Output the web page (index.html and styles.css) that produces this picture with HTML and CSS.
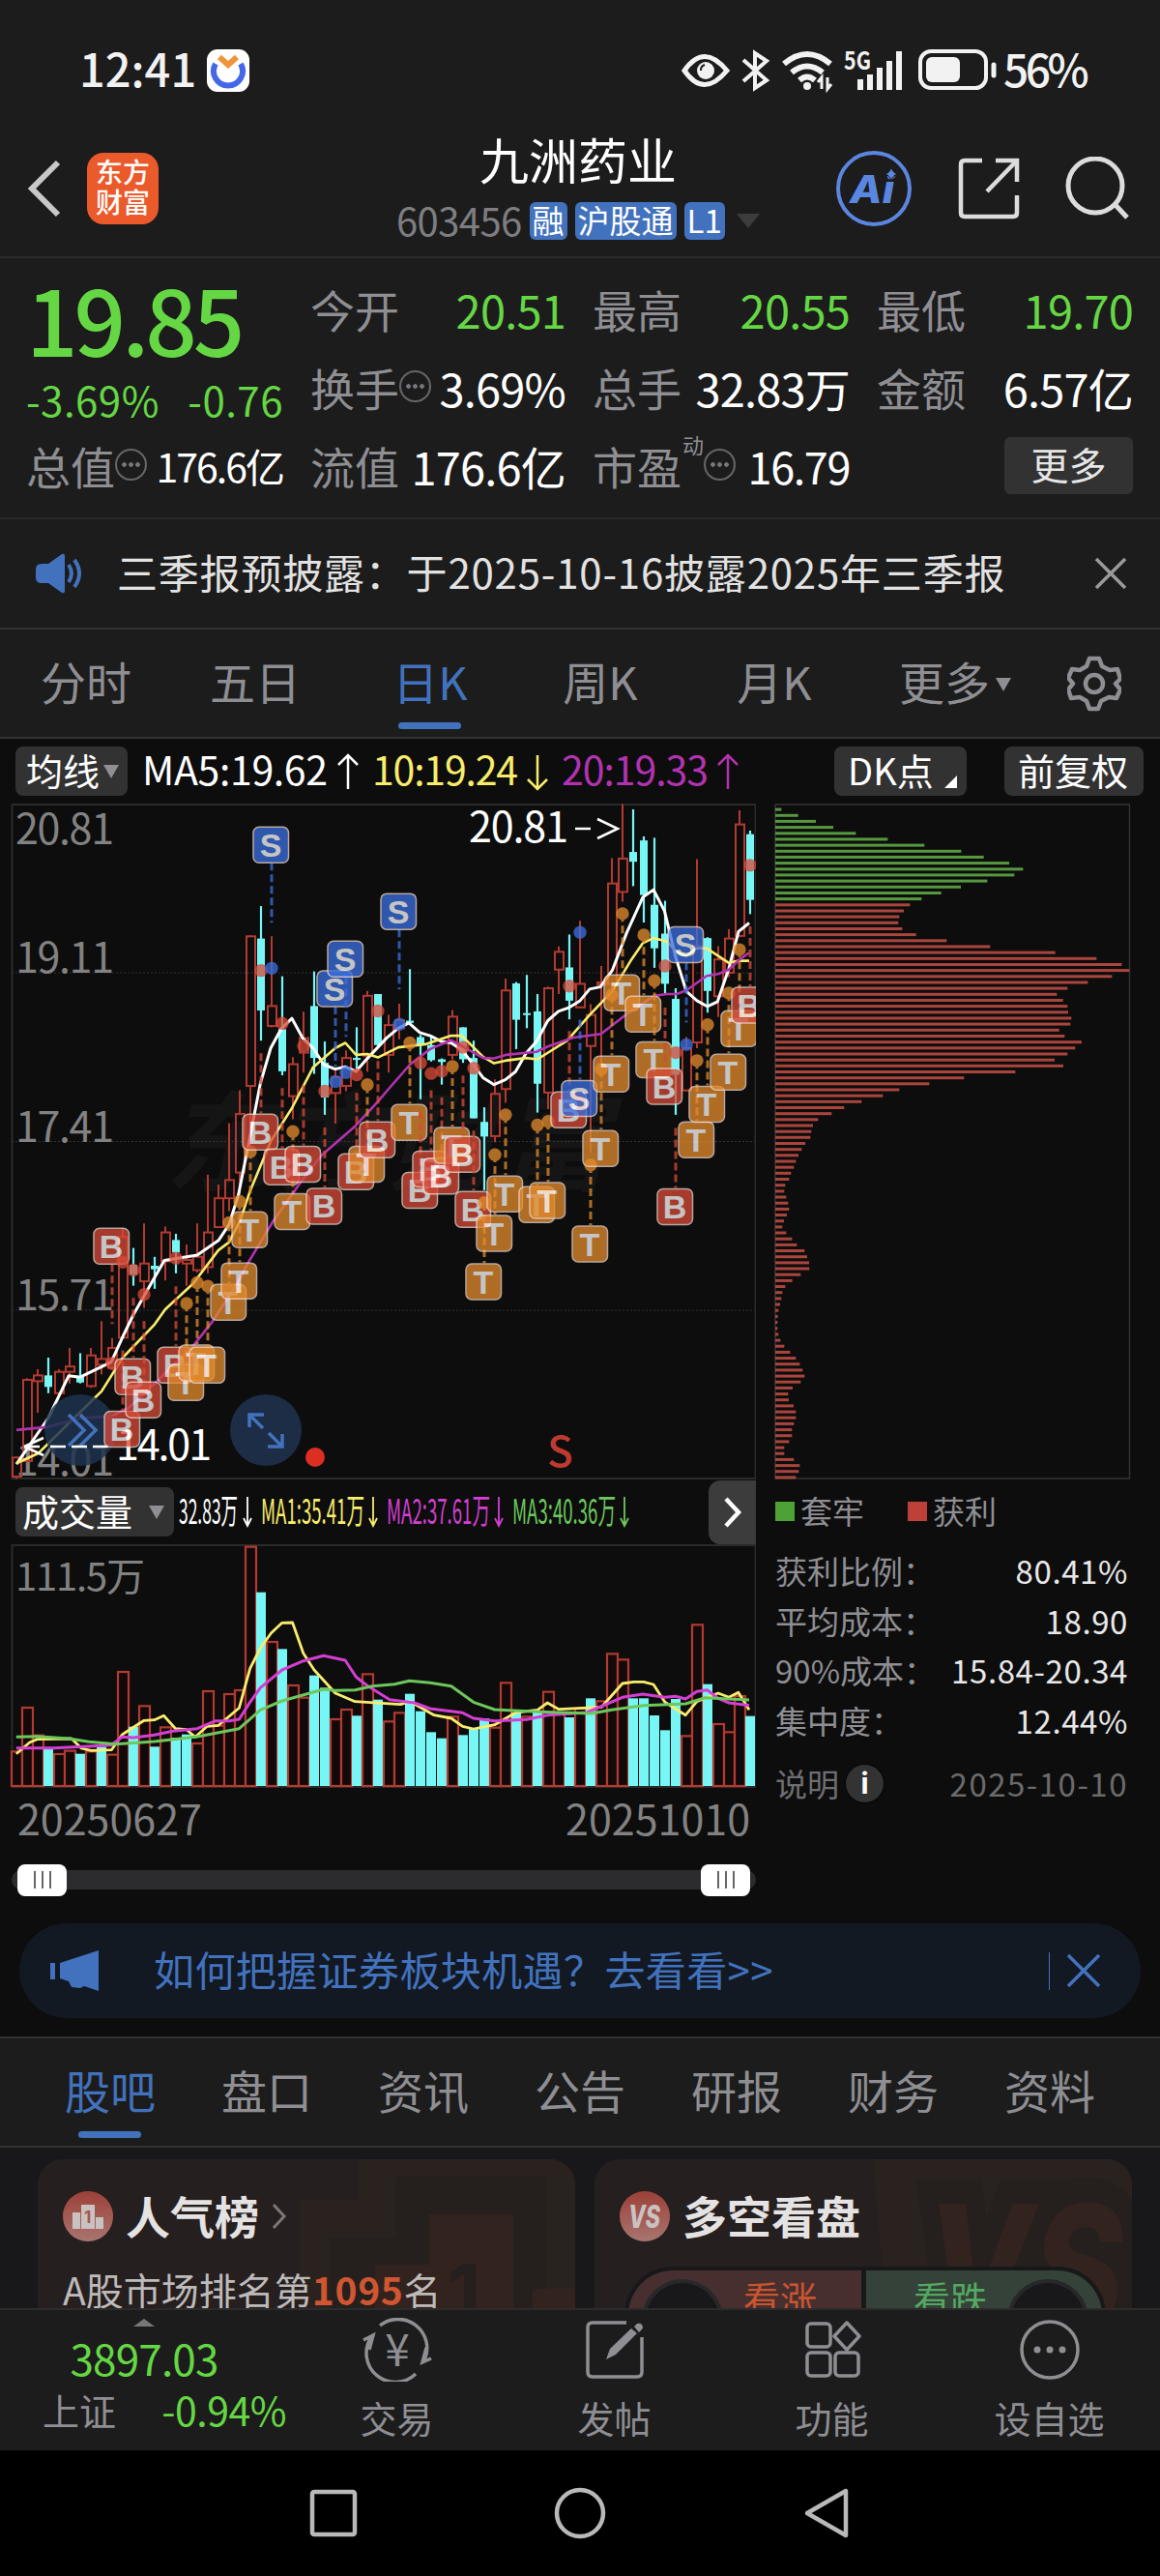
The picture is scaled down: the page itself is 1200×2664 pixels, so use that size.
FILE: index.html
```html
<!DOCTYPE html>
<html lang="zh-CN">
<head>
  <meta charset="UTF-8" />
  <meta name="viewport" content="width=device-width, initial-scale=1" />
  <title>九洲药业 603456</title>
  <link rel="stylesheet" href="styles.css">
</head>
<body>
  <div class="status-bar">
    <span class="clock">12:41</span>
    <svg class="app-dot" width="44" height="44" viewBox="0 0 44 44">
      <rect width="44" height="44" rx="11" fill="#fff"/>
      <path d="M9 15a15 15 0 1 0 26 0" fill="none" stroke="#4468e8" stroke-width="6"/>
      <path d="M13 8l9 8 9-8" fill="none" stroke="#f0943a" stroke-width="6"/>
    </svg>
    <svg class="status-icons" width="330" height="50" viewBox="0 0 330 50" fill="none" stroke="#f2f2f2">
      <path d="M4 25q20-29 44 0q-24 29-44 0z" stroke-width="5"/>
      <circle cx="26" cy="25" r="9" fill="#f2f2f2" stroke="none"/>
      <path d="M25 19a6 6 0 0 0-4 6" stroke="#1c1c1c" stroke-width="2"/>
      <path d="M65 14l24 21-12 8V7l12 8-24 21" stroke-width="4"/>
      <path d="M107 18q24-20 48 0M115 27q16-13 32 0M123 35q8-7 16 0" stroke-width="6"/>
      <circle cx="131" cy="41" r="4" fill="#f2f2f2" stroke="none"/>
      <path d="M146 44V32l-4 5M152 32v12l4-5" stroke-width="3"/>
      <text class="net" x="169" y="24" textLength="28" lengthAdjust="spacingAndGlyphs">5G</text>
      <path d="M186 45V34M196 45V29M206 45V22M216 45V15M226 45V5" stroke-width="6"/>
      <rect x="248" y="5" width="68" height="38" rx="11" stroke-width="4"/>
      <rect x="254" y="11" width="35" height="26" rx="6" fill="#f2f2f2" stroke="none"/>
      <path d="M324 19v11" stroke-width="5" stroke-linecap="round"/>
    </svg>
    <span class="battery">56%</span>
  </div>

  <div class="header">
    <svg class="back" width="40" height="62" viewBox="0 0 40 62"><path d="M33 4L6 31l27 27" fill="none" stroke="#c8c8c8" stroke-width="6"/></svg>
    <div class="logo">东方<br>财富</div>
    <div class="stock">
      <h1>九洲药业</h1>
      <div class="stock-code">
        <span class="code">603456</span>
        <span class="badge">融</span>
        <span class="badge">沪股通</span>
        <span class="badge">L1</span>
        <span class="tri big"></span>
      </div>
    </div>
    <div class="header-icons">
      <svg width="80" height="80" viewBox="0 0 80 80">
        <circle cx="40" cy="40" r="37" fill="none" stroke="#5b86e0" stroke-width="4"/>
        <text class="ai" x="15" y="55" textLength="46" lengthAdjust="spacingAndGlyphs">Ai</text>
        <path d="M58 17q1 7 7 8q-6 1-7 8q-1-7-7-8q6-1 7-8z" fill="#5b86e0" stroke="#1c1c1c"/>
      </svg>
      <svg width="66" height="66" viewBox="0 0 66 66" fill="none" stroke="#dcdcdc" stroke-width="4.5">
        <path d="M26 4H8q-4 0-4 4v50q0 4 4 4h50q4 0 4-4V40M40 4h22v22M62 4L31 36"/>
      </svg>
      <svg width="66" height="66" viewBox="0 0 66 66" fill="none" stroke="#dcdcdc" stroke-width="5">
        <circle cx="31" cy="30" r="28"/><path d="M51 49l13 14"/>
      </svg>
    </div>
  </div>

  <div class="quote">
    <div class="price-box">
      <div class="price">19.85</div>
      <div class="change"><span>-3.69%</span><span>-0.76</span></div>
    </div>
    <div class="cell"><label>今开</label><b class="green">20.51</b></div>
    <div class="cell"><label>最高</label><b class="green">20.55</b></div>
    <div class="cell"><label>最低</label><b class="green">19.70</b></div>
    <div class="cell"><label>换手<i class="more-dot"></i></label><b>3.69%</b></div>
    <div class="cell"><label>总手</label><b>32.83万</b></div>
    <div class="cell"><label>金额</label><b>6.57亿</b></div>
    <div class="cell"><label>总值<i class="more-dot"></i></label><b class="small">176.6亿</b></div>
    <div class="cell"><label>流值</label><b>176.6亿</b></div>
    <div class="cell"><label>市盈<sup>动</sup><i class="more-dot"></i></label><b class="pe">16.79</b></div>
    <div class="cell"><button class="more-btn">更多</button></div>
  </div>

  <div class="notice">
    <svg width="50" height="42" viewBox="0 0 50 42">
      <path d="M0 17q0-6 6-6h7L27 1q3-1 3 2v36q0 3-3 2L13 31H6q-6 0-6-6z" fill="#4272bd"/>
      <path d="M34 12q6 9 0 18M40 7q10 14 0 28" fill="none" stroke="#4272bd" stroke-width="4"/>
    </svg>
    <p>三季报预披露：于2025-10-16披露2025年三季报</p>
    <svg width="34" height="34" viewBox="0 0 34 34"><path d="M2 2l30 30M32 2L2 32" stroke="#9a9a9a" stroke-width="3.5"/></svg>
  </div>

  <div class="period-tabs">
    <span>分时</span>
    <span>五日</span>
    <span class="active">日K</span>
    <span>周K</span>
    <span>月K</span>
    <span>更多<i class="tri"></i></span>
    <svg width="56" height="58" viewBox="0 0 56 58" fill="none" stroke="#8e8e93" stroke-width="4.5" stroke-linejoin="round">
      <path d="M23 3h10l3 8 8 4 8-1 3 10-5 5 5 6-4 9-8-1-8 4-3 8H23l-3-8-7-4-9 1-3-9 5-6-5-6 4-9 8 1 7-4z"/>
      <circle cx="28" cy="29" r="9"/>
    </svg>
  </div>

  <div class="chart-area">
    <div class="ma-bar">
      <span class="pill">均线<i class="tri"></i></span>
      <svg class="ma-values" width="640" height="50" viewBox="0 0 640 50">
        <g fill="#fff" stroke="#fff"><text x="0" y="39" textLength="192">MA5:19.62</text><path d="M213 43V8M203 18l10-10 10 10"/></g>
        <g fill="#f8ec6c" stroke="#f8ec6c"><text x="238" y="39" textLength="151">10:19.24</text><path d="M409 8v35M399 33l10 10 10-10"/></g>
        <g fill="#b233b0" stroke="#b233b0"><text x="434" y="39" textLength="152">20:19.33</text><path d="M606 43V8M596 18l10-10 10 10"/></g>
      </svg>
      <span class="pill dk">DK点<i class="corner"></i></span>
      <span class="pill adj">前复权</span>
    </div>

    <div class="charts">
      <div class="left">
        <svg id="kline" width="782" height="699" viewBox="0 0 782 699"></svg>
        <div class="vol-bar">
          <span class="pill">成交量<i class="tri"></i></span>
          <svg width="480" height="50" viewBox="0 0 480 50">
            <g fill="#fff" stroke="#fff"><text x="0" y="37" textLength="61" lengthAdjust="spacingAndGlyphs">32.83万</text><path d="M71 9v30M67 31l4 8 4-8"/></g>
            <g fill="#f8ec6c" stroke="#f8ec6c"><text x="85" y="37" textLength="107" lengthAdjust="spacingAndGlyphs">MA1:35.41万</text><path d="M201 9v30M197 31l4 8 4-8"/></g>
            <g fill="#d23fd2" stroke="#d23fd2"><text x="215" y="37" textLength="107" lengthAdjust="spacingAndGlyphs">MA2:37.61万</text><path d="M331 9v30M327 31l4 8 4-8"/></g>
            <g fill="#6cc75c" stroke="#6cc75c"><text x="345" y="37" textLength="107" lengthAdjust="spacingAndGlyphs">MA3:40.36万</text><path d="M461 9v30M457 31l4 8 4-8"/></g>
          </svg>
          <span class="next"><svg width="20" height="34" viewBox="0 0 20 34"><path d="M3 3l13 14L3 31" fill="none" stroke="#fff" stroke-width="5"/></svg></span>
        </div>
        <svg id="volume" width="782" height="252" viewBox="0 0 782 252"></svg>
        <div class="dates"><span>20250627</span><span>20251010</span></div>
        <div class="slider"><i class="handle"></i><i class="handle"></i></div>
      </div>

      <div class="right">
        <svg id="chips" width="370" height="699" viewBox="0 0 370 699"></svg>
        <div class="legend">
          <span><i class="sq g"></i>套牢</span>
          <span><i class="sq r"></i>获利</span>
        </div>
        <div class="chip-row"><label>获利比例：</label><b>80.41%</b></div>
        <div class="chip-row"><label>平均成本：</label><b>18.90</b></div>
        <div class="chip-row"><label>90%成本：</label><b>15.84-20.34</b></div>
        <div class="chip-row"><label>集中度：</label><b>12.44%</b></div>
        <div class="chip-row note"><label>说明<i class="info">i</i></label><span>2025-10-10</span></div>
      </div>
    </div>

    <div class="banner">
      <svg width="50" height="42" viewBox="0 0 50 42" fill="#4272bd">
        <path d="M0 13h5v17H0zM10 13L50 0v42l-15-5-4 2-9-1-3-6-9-3z"/>
      </svg>
      <p>如何把握证券板块机遇？去看看&gt;&gt;</p>
      <i class="bar"></i>
      <svg width="34" height="36" viewBox="0 0 34 36"><path d="M1 2l32 32M33 2L1 34" stroke="#4272bd" stroke-width="3.5"/></svg>
    </div>
  </div>

  <div class="info-tabs">
    <span class="active">股吧</span>
    <span>盘口</span>
    <span>资讯</span>
    <span>公告</span>
    <span>研报</span>
    <span>财务</span>
    <span>资料</span>
  </div>

  <div class="cards">
    <div class="card">
      <svg class="card-bg" width="290" height="160" viewBox="0 0 290 160">
        <path d="M5 160V42h61V0h224v160z" fill="#2a221f"/>
        <path d="M36 160V81h68V18h156v142z" fill="#251f1e"/>
        <path d="M83 160v-51h56V57h87v103zM246 134h44v26h-44z" fill="#33231f"/>
        <text class="bg-one" x="158" y="166">1</text>
      </svg>
      <div class="card-title">
        <svg width="52" height="52" viewBox="0 0 52 52">
          <circle cx="26" cy="26" r="26" fill="url(#rd)"/>
          <path d="M10 22h8v17h-8zM19 14h14v25H19zM34 27h8v12h-8z" fill="#c9c2c1"/>
          <text class="one" x="22" y="33">1</text>
          <defs><linearGradient id="rd" x1="0" y1="0" x2="0" y2="1"><stop offset="0" stop-color="#9c4038"/><stop offset="1" stop-color="#a87570"/></linearGradient></defs>
        </svg>
        <h2>人气榜</h2>
        <svg width="16" height="26" viewBox="0 0 16 26"><path d="M2 1l11 12L2 25" fill="none" stroke="#7d7675" stroke-width="3"/></svg>
      </div>
      <p class="rank">A股市场排名第<b>1095</b>名</p>
    </div>
    <div class="card">
      <svg class="card-bg" width="270" height="160" viewBox="0 0 270 160">
        <path d="M2 0h268v160H16z" fill="#2a221f"/>
        <text class="bg-vs" x="56" y="180" textLength="205" lengthAdjust="spacingAndGlyphs">VS</text>
      </svg>
      <div class="card-title">
        <svg width="52" height="52" viewBox="0 0 52 52">
          <circle cx="26" cy="26" r="26" fill="url(#rd)"/>
          <text class="vs" x="9" y="38" textLength="33" lengthAdjust="spacingAndGlyphs">VS</text>
        </svg>
        <h2>多空看盘</h2>
      </div>
      <div class="vote">
        <div class="up"><i></i><span>看涨</span></div>
        <div class="down"><span>看跌</span><i></i></div>
      </div>
    </div>
  </div>

  <div class="bottom-nav">
    <div class="index">
      <i class="tri up"></i>
      <div class="index-value">3897.03</div>
      <div class="index-row"><span>上证</span><b>-0.94%</b></div>
    </div>
    <div class="nav-item">
      <svg width="72" height="66" viewBox="0 0 72 66" fill="none" stroke="#8e8e93" stroke-width="3.5">
        <path d="M18 8A30 30 0 0 1 64 44M71 42l-9 4 4-15M55 58A30 30 0 0 1 9 20M1 23l10-5-4 15"/>
        <text class="yen" x="36" y="50">¥</text>
      </svg>
      <span>交易</span>
    </div>
    <div class="nav-item">
      <svg width="62" height="66" viewBox="0 0 62 66" fill="none" stroke="#8e8e93" stroke-width="3.5">
        <path d="M43 5H8q-5 0-5 5v46q0 5 5 5h46q5 0 5-5V20"/>
        <path d="M22 43l4-11L48 11l6 5-22 22zM51 9l3-3q3-1 5 1 2 3 0 5l-3 3z" fill="#8e8e93" stroke="none"/>
      </svg>
      <span>发帖</span>
    </div>
    <div class="nav-item">
      <svg width="60" height="66" viewBox="0 0 60 66" fill="none" stroke="#8e8e93" stroke-width="3.5">
        <rect x="4" y="6" width="24" height="24" rx="4"/><rect x="4" y="36" width="24" height="24" rx="4"/><rect x="33" y="36" width="24" height="24" rx="4"/>
        <path d="M45 5l13 14-13 14-13-14z" stroke-linejoin="round"/>
      </svg>
      <span>功能</span>
    </div>
    <div class="nav-item">
      <svg width="62" height="66" viewBox="0 0 62 66" fill="none" stroke="#8e8e93" stroke-width="3.5">
        <circle cx="31" cy="33" r="29"/>
        <g fill="#8e8e93" stroke="none"><circle cx="18" cy="33" r="3.5"/><circle cx="31" cy="33" r="3.5"/><circle cx="44" cy="33" r="3.5"/></g>
      </svg>
      <span>设自选</span>
    </div>
  </div>

  <div class="system-nav">
    <svg width="50" height="56" viewBox="0 0 50 56"><rect x="3" y="6" width="44" height="44" rx="2" fill="none" stroke="#b9b9b9" stroke-width="4.5"/></svg>
    <svg width="56" height="56" viewBox="0 0 56 56"><circle cx="28" cy="28" r="24" fill="none" stroke="#b9b9b9" stroke-width="4.5"/></svg>
    <svg width="50" height="56" viewBox="0 0 50 56"><path d="M45 5v46L5 28z" fill="none" stroke="#b9b9b9" stroke-width="4.5" stroke-linejoin="round"/></svg>
  </div>

  <script src="chart.js"></script>
</body>
</html>
```
FILE: styles.css
```css
* {
  box-sizing: border-box;
}
body {
  margin: 0;
  width: 1200px;
  height: 2664px;
  overflow: hidden;
  display: flex;
  flex-direction: column;
  background: #1c1c1c;
  color: #fff;
  font-family: "Noto Sans CJK SC", sans-serif;
  line-height: 1;
}
h1, h2, p {
  margin: 0;
  font-weight: 400;
}
b {
  font-weight: 400;
}
i {
  font-style: normal;
}
svg {
  display: block;
  flex: none;
}

/* Status bar */
.status-bar {
  height: 145px;
  padding: 0 74px 0 82px;
  display: flex;
  align-items: center;
  color: #f2f2f2;
  font-size: 47px;
  font-weight: 500;
}
.clock {
  width: 132px;
  padding-bottom: 6px;
}
.status-icons {
  margin-left: auto;
}
.net {
  font-size: 26px;
  font-weight: 700;
  fill: #f2f2f2;
  stroke: none;
}
.battery {
  width: 88px;
  margin-left: 4px;
  padding-bottom: 6px;
  font-size: 46px;
  letter-spacing: -3.5px;
  white-space: nowrap;
}

/* Header */
.header {
  height: 122px;
  border-bottom: 2px solid #2c2c2c;
  display: grid;
  grid-template-columns: 90px 74px 692px 344px;
  grid-template-rows: 99px;
  align-items: center;
}
.back {
  margin-left: 27px;
}
.logo {
  width: 74px;
  height: 74px;
  border-radius: 17px;
  background: #ea5a2b;
  font-size: 28px;
  line-height: 31px;
  font-weight: 500;
  text-align: center;
  padding-top: 4px;
}
.stock {
  padding-left: 246px;
}
.stock h1 {
  font-size: 51px;
  line-height: 54px;
  margin: -4px 0 18px 86px;
}
.stock-code {
  display: flex;
  align-items: center;
  gap: 8px;
  height: 40px;
}
.code {
  font-size: 40px;
  color: #7e7e82;
  letter-spacing: -0.6px;
  padding-bottom: 3px;
}
.badge {
  height: 39px;
  padding: 0 3px;
  border-radius: 6px;
  background: #4272bd;
  font-size: 33px;
  line-height: 36px;
}
.header-icons {
  display: flex;
  align-items: center;
  gap: 46px;
  padding-left: 8px;
}
.header-icons svg:nth-child(3) {
  margin-left: 2px;
}
.header-icons svg:nth-child(2) {
  margin-right: -2px;
}
.ai {
  font: italic 800 40px "Inter", sans-serif;
  fill: #5b86e0;
}

/* small triangles used for dropdowns */
.tri {
  display: inline-block;
  border: 8px solid transparent;
  border-top: 14px solid #8e8e93;
  border-bottom: 0;
}
.tri.big {
  border-width: 15px 12px 0;
  border-top-color: #3c3c3c;
  margin-left: 4px;
}
.tri.up {
  border-width: 0 11px 8px;
  border-bottom: 8px solid #77777a;
}

/* Quote */
.quote {
  height: 270px;
  padding: 14px 27px 12px;
  border-bottom: 2px solid #272727;
  display: grid;
  grid-template-columns: 266px 264px 266px 265px;
  grid-template-rows: repeat(3, 81px);
  column-gap: 28px;
}
.price-box {
  grid-row: 1 / 3;
  color: #65d744;
}
.price {
  margin-top: -6px;
  font-size: 94px;
  font-weight: 500;
  letter-spacing: -4px;
  line-height: 106px;
}
.change {
  display: flex;
  justify-content: space-between;
  font-size: 42px;
  line-height: 64px;
}
.change span {
  letter-spacing: 0.5px;
}
.cell {
  display: flex;
  align-items: center;
  justify-content: space-between;
  white-space: nowrap;
}
.cell label {
  display: flex;
  align-items: center;
  padding-bottom: 5px;
  font-size: 46px;
  color: #8e8e93;
}
.cell b {
  padding-bottom: 5px;
  font-size: 47px;
  letter-spacing: -0.8px;
}
.cell b.green {
  color: #65d744;
}
.cell b.small {
  font-size: 41px;
  letter-spacing: -2px;
}
.cell b.pe {
  font-size: 45px;
  letter-spacing: -1.4px;
}
.cell sup {
  font-size: 22px;
  margin: -44px 0 0 1px;
}
.more-dot {
  width: 33px;
  height: 33px;
  margin-top: -1px;
  border: 2px solid #66666a;
  border-radius: 50%;
  background: radial-gradient(circle, #77777b 2px, transparent 2.6px) center / 7px 7px repeat-x;
  box-shadow: inset 0 0 0 4px #1c1c1c;
}
.more-btn {
  width: 133px;
  height: 59px;
  margin-left: auto;
  margin-top: -4px;
  padding: 0 0 5px;
  border: 0;
  border-radius: 6px;
  background: #323232;
  color: #e6e6e6;
  font: 39px/1 "Noto Sans CJK SC", sans-serif;
}

/* Notice */
.notice {
  height: 114px;
  padding: 0 34px 0 37px;
  border-bottom: 2px solid #333;
  display: flex;
  align-items: center;
  color: #e2e2e2;
}
.notice p {
  flex: 1;
  margin-left: 34px;
  padding-bottom: 4px;
  font-size: 42px;
  letter-spacing: 0.8px;
  white-space: nowrap;
}

/* Tabs */
.period-tabs {
  height: 113px;
  border-bottom: 2px solid #333;
  display: grid;
  grid-template-columns: 178px 172px 190px 162px 198px 176px 112px;
  justify-items: center;
  align-items: center;
  font-size: 47px;
  color: #8e8e93;
}
.period-tabs span,
.info-tabs span {
  padding-bottom: 6px;
}
.period-tabs .tri {
  margin: 0 0 9px 6px;
}
.active {
  color: #4272bd;
  position: relative;
}
.active::after {
  content: "";
  position: absolute;
  left: 50%;
  bottom: -21px;
  width: 65px;
  height: 7px;
  margin-left: -33px;
  border-radius: 4px;
  background: #4272bd;
}

/* Charts */
.chart-area {
  height: 1342px;
  background: #0d0d0d;
}
.pill {
  display: flex;
  align-items: center;
  height: 51px;
  border-radius: 8px;
  background: #323232;
  font-size: 38px;
  padding: 0 9px 4px 11px;
  white-space: nowrap;
}
.ma-bar {
  height: 67px;
  padding: 0 16px;
  display: flex;
  align-items: center;
}
.ma-bar .tri {
  margin: 4px 0 0 4px;
}
.ma-values {
  margin: 0 76px 0 15px;
  font-size: 41px;
}
.ma-values path,
.vol-bar path {
  fill: none;
  stroke-width: 2.5;
}
.vol-bar g path {
  stroke-width: 1.8;
}
.ma-values text,
.vol-bar text {
  stroke: none;
}
.dk {
  width: 137px;
  padding: 0 0 4px 14px;
}
.corner {
  align-self: flex-end;
  margin: 0 0 4px 11px;
  border-left: 13px solid transparent;
  border-bottom: 13px solid #fff;
}
.adj {
  width: 144px;
  padding: 0 0 4px 14px;
  margin-left: 39px;
}
.charts {
  display: flex;
  height: 1158px;
}
.left {
  width: 782px;
  margin-right: 19px;
}
.vol-bar {
  height: 67px;
  padding-left: 16px;
  display: flex;
  align-items: center;
}
.vol-bar .pill {
  width: 164px;
  margin-right: 5px;
  padding-left: 7px;
}
.vol-bar .tri {
  margin: 4px 0 0 17px;
}
.vol-bar svg {
  font-size: 36px;
}
.next {
  width: 49px;
  height: 66px;
  margin-left: auto;
  border-radius: 12px 0 0 12px;
  background: #3c3c3c;
  display: flex;
  align-items: center;
  justify-content: center;
}
.next svg path {
  stroke-width: 4.5;
}
.dates {
  height: 78px;
  padding: 9px 6px 0 18px;
  display: flex;
  justify-content: space-between;
  font-size: 43px;
  color: #828282;
}
.slider {
  height: 20px;
  margin: 7px 0 0 12px;
  padding: 0 6px;
  border-radius: 10px;
  background: #2c2c2e;
  display: flex;
  align-items: center;
  justify-content: space-between;
}
.handle {
  width: 51px;
  height: 33px;
  border-radius: 8px;
  background: linear-gradient(90deg, transparent 17px, #666 17px 19px, transparent 19px 25px, #666 25px 27px, transparent 27px 33px, #666 33px 35px, transparent 35px) center / 100% 18px no-repeat #fff;
}
.right {
  width: 370px;
}
.legend {
  display: flex;
  height: 65px;
  margin-bottom: 4px;
  align-items: center;
  font-size: 33px;
  color: #8e8e93;
}
.legend span {
  width: 137px;
  display: flex;
  align-items: center;
}
.sq {
  width: 20px;
  height: 20px;
  margin: 0 6px 0 1px;
}
.sq.g {
  background: #4ca234;
}
.sq.r {
  background: #be4139;
}
.chip-row {
  height: 51.5px;
  padding: 0 4px 0 1px;
  display: flex;
  align-items: center;
  justify-content: space-between;
  font-size: 33px;
  white-space: nowrap;
}
.chip-row label {
  display: flex;
  align-items: center;
  color: #8e8e93;
}
.chip-row b {
  color: #e8e8e8;
  letter-spacing: 0.6px;
}
.chip-row.note {
  height: 78px;
  color: #6a6a6a;
}
.chip-row.note span {
  letter-spacing: 1.5px;
}
.chip-row.note label {
  color: #6e6e72;
}
.info {
  width: 39px;
  height: 39px;
  margin-left: 7px;
  border-radius: 50%;
  background: #333;
  box-shadow: 0 0 0 1px #060606;
  color: #fff;
  font: 700 30px/38px "Inter", sans-serif;
  text-align: center;
}

/* Banner */
.banner {
  height: 98px;
  margin: 0 20px;
  padding: 0 42px 0 32px;
  border-radius: 49px;
  background: #121923;
  display: flex;
  align-items: center;
  color: #4272bd;
}
.banner p {
  flex: 1;
  margin-left: 57px;
  padding-bottom: 4px;
  font-size: 42px;
  letter-spacing: 0.4px;
}
.banner .bar {
  width: 1px;
  height: 39px;
  margin-right: 18px;
  background: #4272bd;
}

/* Info tabs */
.info-tabs {
  height: 115px;
  padding: 0 33px;
  border-top: 2px solid #333;
  border-bottom: 2px solid #333;
  display: grid;
  grid-template-columns: repeat(7, 1fr);
  justify-items: center;
  align-items: center;
  font-size: 47px;
  color: #8e8e93;
}

/* Cards */
.cards {
  height: 166px;
  padding: 12px 29px 0 39px;
  background: #18181a;
  display: flex;
  gap: 20px;
  overflow: hidden;
}
.card {
  position: relative;
  width: 556px;
  height: 300px;
  padding: 33px 26px;
  border-radius: 26px;
  background: #261f1f;
  overflow: hidden;
}
.card-bg {
  position: absolute;
  top: 0;
  right: 0;
}
.bg-one {
  font: 700 80px "Inter", sans-serif;
  fill: #251f1e;
}
.bg-vs {
  font: italic 800 184px "Inter", sans-serif;
  fill: #33231f;
  stroke: #251f1e;
  stroke-width: 50px;
  paint-order: stroke;
}
.card-title {
  position: relative;
  display: flex;
  align-items: center;
  gap: 13px;
}
.card-title h2 {
  font-size: 46px;
  font-weight: 700;
  color: #e4e2e2;
  line-height: 48px;
  padding-bottom: 4px;
}
.one {
  font: 700 17px "Inter", sans-serif;
  fill: #a6564f;
}
.vs {
  font: italic 800 32px "Inter", sans-serif;
  fill: #c9c2c1;
}
.rank {
  position: relative;
  margin-top: 30px;
  font-size: 39px;
  color: #bdbaba;
  white-space: nowrap;
}
.rank b {
  font-weight: 700;
  letter-spacing: 0.7px;
  color: #cf5630;
}
.vote {
  position: relative;
  width: 498px;
  height: 110px;
  margin: 26px 0 0 5px;
  border: 4px solid #18181a;
  border-radius: 50px;
  background: #18181a;
  display: flex;
  gap: 5px;
  overflow: hidden;
  font-size: 38px;
}
.vote > div {
  flex: 1;
  display: flex;
  justify-content: space-between;
  padding: 9px 10px 0 14px;
}
.vote .up {
  background: #472f2f;
  color: #c8552f;
  padding-right: 46px;
}
.vote .down {
  background: #344239;
  color: #54a862;
  padding: 9px 14px 0 49px;
}
.vote i {
  width: 84px;
  height: 84px;
  border-radius: 50%;
  background: #18181a;
  border: 4px solid rgba(255, 255, 255, 0.07);
}

/* Bottom navigation */
.bottom-nav {
  height: 147px;
  border-top: 2px solid #2c2c2c;
  display: grid;
  grid-template-columns: 298px repeat(4, 225px);
  background: #1c1c1c;
}
.index {
  display: flex;
  flex-direction: column;
  align-items: center;
  padding-top: 9px;
}
.index-value {
  margin-top: 7px;
  font-size: 44px;
  line-height: 50px;
  letter-spacing: -0.8px;
  color: #65d744;
}
.index-row {
  align-self: stretch;
  padding: 0 2px 0 44px;
  margin-top: 8px;
  display: flex;
  align-items: center;
  justify-content: space-between;
  font-size: 38px;
  color: #8e8e93;
}
.index-row b {
  font-size: 41px;
  letter-spacing: -0.5px;
  color: #65d744;
}
.nav-item {
  display: flex;
  flex-direction: column;
  align-items: center;
  padding-top: 8px;
  font-size: 38px;
  color: #8e8e93;
}
.nav-item span {
  margin-top: 18px;
}
.yen {
  font: 400 46px "Noto Sans CJK SC", sans-serif;
  fill: #8e8e93;
  stroke: none;
  text-anchor: middle;
}

.system-nav {
  flex: 1;
  background: #000;
  display: flex;
  align-items: center;
  justify-content: center;
  gap: 202px;
}

/* Chart text */
.axis {
  font-size: 43px;
  fill: #828282;
}
.mark {
  font: 700 34px "Liberation Sans", sans-serif;
  fill: #fff;
  text-anchor: middle;
}
.watermark {
  font-size: 112px;
  font-weight: 700;
  font-style: italic;
  fill: #151515;
}
```
FILE: chart.js
```js
const RED = '#b23a30';
const CYAN = '#77f6f6';
const x = i => 17 + 11 * i;

// one row per day: up/down, high, body top, body bottom, low
const candles = [
  ['r',1495,1497,1540,1545],['r',1318,1322,1505,1508],['r',1298,1312,1325,1396],['c',1272,1312,1338,1352],['r',1298,1304,1352,1356],
  ['r',1250,1292,1304,1330],['c',1262,1313,1328,1330],['r',1250,1267,1336,1340],['r',1190,1275,1288,1310],['r',1228,1250,1295,1300],
  ['r',980,1000,1227,1228],['c',1025,1063,1085,1110],['r',970,1060,1100,1160],['c',1045,1065,1073,1117],['r',977,990,1055,1098],
  ['c',993,1007,1035,1082],['r',1017,1052,1060,1110],['r',970,1045,1075,1080],['r',860,990,1068,1082],['r',882,913,978,980],
  ['r',744,872,913,942],['r',670,723,855,905],['r',320,323,660,800],['c',255,328,490,558],['r',323,480,525,528],
  ['c',413,532,627,636],['r',595,611,683,735],['r',493,552,585,630],['c',402,480,597,633],['c',560,608,686,725],
  ['r',620,640,676,745],['r',580,597,660,672],['c',528,597,601,630],['r',446,457,592,628],['c',453,453,568,570],
  ['r',500,523,590,630],['r',475,512,530,555],['c',397,513,518,520],['c',545,550,567,690],['c',550,568,602,605],
  ['c',598,600,606,657],['r',489,504,590,600],['c',528,528,600,608],['c',558,597,733,733],['c',708,741,774,895],
  ['r',645,678,773,787],['r',418,445,667,698],['c',426,429,511,577],['c',410,496,500,530],['c',453,492,655,720],
  ['r',436,440,675,712],['r',346,358,398,453],['c',319,393,468,510],['r',288,430,483,485],['r',476,500,570,810],
  ['r',390,427,432,620],['r',147,204,430,440],['r',25,148,223,245],['c',37,133,155,210],['c',98,107,230,292],
  ['c',101,252,350,394],['c',243,317,430,455],['c',440,464,635,725],['r',550,575,670,672],['r',149,345,562,575],
  ['c',325,327,446,495],['r',345,375,458,505],['r',307,328,405,415],['r',39,71,322,325],['c',85,93,241,273]
];

const ma5 = [51,1512,150,1408,213,1313,249,1316,345,1282,381,1225,414,1175,510,1053,612,1041,678,1008,711,972,740,905,777,770,808,655,840,575,874,530,906,508,940,553,972,575,1005,612,1040,622,1072,617,1105,627,1140,598,1200,552,1236,530,1269,518,1303,540,1335,547,1370,560,1400,563,1435,580,1467,610,1500,642,1533,657,1568,646,1600,628,1632,587,1665,560,1700,513,1733,492,1767,483,1800,468,1830,442,1863,437,1900,400,1945,315,1995,235,2028,218,2062,265,2097,370,2130,447,2163,468,2195,481,2227,470,2262,395,2292,312,2325,293];
const ma10 = [51,1510,120,1487,213,1420,315,1348,381,1272,480,1197,513,1163,600,1105,678,1030,711,1012,744,965,777,895,840,785,906,710,972,618,1040,575,1072,563,1105,590,1140,588,1173,596,1200,586,1236,573,1320,566,1400,547,1433,547,1500,595,1533,609,1568,603,1632,597,1668,600,1760,558,1830,500,1900,447,1960,375,1995,338,2028,327,2070,335,2100,358,2130,368,2160,350,2193,350,2262,383,2292,378,2325,378];
const ma20 = [51,1435,150,1428,250,1408,345,1404,400,1385,480,1330,600,1245,660,1190,740,1100,770,1058,850,962,940,870,1000,815,1100,752,1173,695,1200,672,1272,612,1335,577,1400,557,1500,597,1533,598,1570,590,1665,583,1700,571,1780,551,1865,543,1945,498,2030,457,2070,453,2100,453,2130,445,2193,412,2229,408,2262,398,2292,377,2325,360];

// day, label, box centre, dot, box above its line
const marks = [
  [9,'B',1020,1285,1],[10,'B',1432,1057],[11,'B',1314,1075],[12,'B',1366,1130],[15,'B',1288,1048],[16,'T',1327,1150],
  [17,'T',1283,1103],[18,'T',1288,1111],[20,'T',1146,968],[21,'T',1098,920],[22,'T',983,808],[23,'B',763,400],
  [24,'S',116,395,1],[25,'B',841,519],[26,'T',942,763],[27,'B',835,570],[29,'B',930,672],[30,'S',440,650,1],
  [31,'S',373,630,1],[32,'B',852,635],[33,'T',835,657],[34,'B',780,491],[36,'S',266,521,1],[37,'T',741,563],
  [38,'B',894,608],[39,'B',846,632],[40,'B',862,627],[41,'T',793,616],[42,'B',813,573],[43,'B',937,620],
  [44,'T',1100,923],[45,'T',991,815],[46,'T',902,725],[49,'T',926,748],[50,'T',917,740],[52,'B',713,435],
  [53,'S',687,314],[54,'T',1015,838],[55,'T',800,622],[56,'T',632,455],[57,'T',449,272],[59,'T',497,320],
  [60,'T',600,423],[61,'B',660,390],[62,'B',931,585],[63,'S',341,567,1],[64,'T',780,603],[65,'T',700,522],
  [67,'T',628,451],[68,'T',530,353],[69,'B',477,163]
];
const markColor = { B: '#d64a38', T: '#e28a2c', S: '#3a6fe0' };

function line(points, sx, fy, color, width) {
  let d = '';
  for (let k = 0; k < points.length; k += 2) {
    d += (points[k] / sx).toFixed(1) + ',' + fy(points[k + 1]).toFixed(1) + ' ';
  }
  return `<polyline points="${d}" fill="none" stroke="${color}" stroke-width="${width}" stroke-linejoin="round"/>`;
}

function drawKline() {
  const y = v => v / 2.178 - 11;
  let s = '<text class="watermark" x="170" y="392" textLength="460">东方财富</text>';
  s += '<rect x="12.5" y="1" width="769" height="697" fill="none" stroke="#2a2a2a" stroke-width="2"/>';
  [175, 349.5, 524].forEach(g => {
    s += `<path d="M12 ${g}H781" stroke="#333" stroke-dasharray="2 2"/>`;
  });
  [['20.81', 42], ['19.11', 175], ['17.41', 350], ['15.71', 524], ['14.01', 695]].forEach(t => {
    s += `<text class="axis" x="16" y="${t[1]}" textLength="102">${t[0]}</text>`;
  });

  candles.forEach((c, i) => {
    const [type, hi, top, bot, lo] = c;
    const cx = x(i);
    const h = Math.max(y(bot) - y(top), 2);
    if (type === 'r') {
      s += `<path d="M${cx} ${y(hi)}V${y(top)}M${cx} ${y(bot)}V${y(lo)}" stroke="${RED}" stroke-width="2"/>`;
      s += `<rect x="${cx - 4}" y="${y(top)}" width="9" height="${h}" fill="none" stroke="${RED}" stroke-width="2"/>`;
    } else {
      s += `<path d="M${cx} ${y(hi)}V${y(lo)}" stroke="${CYAN}" stroke-width="2.2"/>`;
      s += `<rect x="${cx - 4}" y="${y(top)}" width="8" height="${h}" fill="${CYAN}"/>`;
    }
  });

  s += line(ma5, 3, y, '#fff', 3) + line(ma10, 3, y, '#f9ed6e', 2.6) + line(ma20, 3, y, '#b233b0', 2.6);

  // round buttons
  s += '<circle cx="83" cy="648" r="37" fill="#1f3450" opacity=".85"/><circle cx="275" cy="648" r="37" fill="#1c2d45"/>';
  s += '<g fill="none" stroke="#4272bd" stroke-width="3.5"><path d="M71 632l16 16-16 16M83 632l16 16-16 16M258 645v-13h15M258 632l14 14M277 665h15v-13M292 665l-14-14"/></g>';
  s += '<path d="M25 665l20-9M25 665l20 9M25 665h16M52 665h16M74 665h16M96 665h16" stroke="#fff" stroke-width="2.5"/>';
  s += '<text x="120" y="679" font-size="43" fill="#fff" textLength="99">14.01</text>';
  s += '<text x="485" y="40" font-size="43" fill="#fff" textLength="103">20.81</text><path d="M595 26h16M618 16l21 10-21 10" fill="none" stroke="#fff" stroke-width="2.5"/>';
  s += '<circle cx="326" cy="676" r="10" fill="#dc2f22"/>';
  s += '<text x="566" y="686" font-size="44" font-weight="500" fill="#be3a30">S</text>';

  marks.forEach(m => {
    const [i, label, box, dot, above] = m;
    const cx = x(i) - 1;
    const by = y(box);
    const from = above ? by + 19 : by - 81;
    const color = markColor[label];
    s += `<g opacity=".76"><path d="M${cx + 1} ${from}V${from + 62}" stroke="${color}" stroke-width="3" stroke-dasharray="8 4"/>`;
    s += `<ellipse cx="${cx + 1}" cy="${y(dot)}" rx="6.7" ry="6.7" fill="${color}"/>`;
    s += `<rect x="${cx - 18}" y="${by - 18}" width="36.5" height="37" rx="6" fill="${color}" stroke="#f0d8cc" stroke-width="1.5"/>`;
    s += `<text class="mark" x="${cx}" y="${by + 12.5}">${label}</text></g>`;
  });
  document.getElementById('kline').innerHTML = s;
}

// volume bar tops, counted down from the frame
const volumes = [840,704,790,835,848,838,850,840,828,850,593,766,699,828,765,800,790,815,653,760,662,650,205,349,500,525,635,673,607,645,740,710,732,600,682,747,720,664,718,783,802,732,792,770,740,766,627,722,732,722,655,725,737,707,678,684,537,555,678,678,731,777,680,792,447,634,755,780,668,733];
const volDown = [3,6,8,11,13,15,16,23,25,28,29,32,34,37,38,39,40,42,43,44,47,49,52,54,58,59,60,61,62,65,69];
const vol5 = [33,850,60,815,75,805,145,803,165,833,185,840,226,838,248,790,292,747,313,745,332,732,356,772,378,775,396,798,420,765,443,762,485,708,507,585,528,522,550,475,572,444,593,443,615,538,637,590,680,662,720,688,812,697,832,688,880,730,915,740,938,765,960,773,1003,760,1046,722,1090,714,1110,692,1133,712,1220,705,1262,632,1285,627,1305,627,1325,635,1348,690,1390,730,1413,688,1456,662,1478,675,1497,660,1519,714];
const vol10 = [33,832,110,832,225,823,248,798,270,800,313,792,350,780,400,772,437,748,465,748,485,743,507,690,528,645,572,590,615,562,656,546,700,560,722,612,744,638,790,682,840,692,872,710,938,723,960,740,1003,748,1068,744,1110,730,1190,722,1262,675,1303,665,1348,675,1370,672,1390,680,1413,657,1434,652,1456,678,1478,692,1519,700];
const vol20 = [33,798,75,796,140,803,180,813,235,820,313,812,400,797,485,772,528,714,572,686,656,650,680,654,720,652,755,640,800,634,830,624,872,630,915,640,960,690,1003,713,1090,720,1200,725,1240,714,1305,700,1390,695,1430,676,1519,683];

function drawVolume() {
  const y = v => (v - 203) / 3 + 1;
  const base = y(950);
  let s = '<rect x="12.5" y="1" width="769" height="250" fill="none" stroke="#2a2a2a" stroke-width="2"/>';
  s += '<text x="16" y="48" font-size="40" fill="#828282" textLength="134">111.5万</text>';
  volumes.forEach((v, i) => {
    if (volDown.includes(i)) {
      s += `<rect x="${x(i) - 5}" y="${y(v)}" width="10" height="${base - y(v)}" fill="${CYAN}"/>`;
    } else {
      s += `<rect x="${x(i) - 5}" y="${y(v) + 1}" width="11" height="${base - y(v) - 1}" fill="#120a0a" stroke="${RED}" stroke-width="2.2"/>`;
    }
  });
  s += line(vol5, 1.96, y, '#f9ed6e', 2.8) + line(vol10, 1.96, y, '#d23fd2', 3) + line(vol20, 1.96, y, '#6cc75c', 3);
  document.getElementById('volume').innerHTML = s;
}

// chip distribution, one bar per price level; the first 16 are above the current price
const chips = [84,136,191,245,315,414,528,642,712,791,834,807,723,641,580,519,
  483,464,450,447,459,502,597,732,934,1062,1140,1164,1110,1035,972,939,958,972,974,984,981,946,963,1016,996,972,932,959,810,651,
  543,450,399,333,279,240,198,182,177,174,158,147,137,129,123,114,108,96,93,99,105,108,101,92,87,99,117,132,156,164,
  170,171,144,118,96,87,84,80,75,73,72,72,75,81,93,111,129,141,150,156,144,119,105,107,122,129,129,123,117,117,
  108,93,93,123,141,138,129];

function drawChips() {
  let s = '<rect x="1" y="1" width="366.5" height="697" fill="none" stroke="#333" stroke-width="1.5"/>';
  chips.forEach((c, i) => {
    s += `<rect x="1" y="${(4.6 + i * 6.168).toFixed(1)}" width="${(c - 65) / 3}" height="3" fill="${i < 16 ? '#56983f' : '#aa453d'}"/>`;
  });
  document.getElementById('chips').innerHTML = s;
}

drawKline();
drawVolume();
drawChips();
```
